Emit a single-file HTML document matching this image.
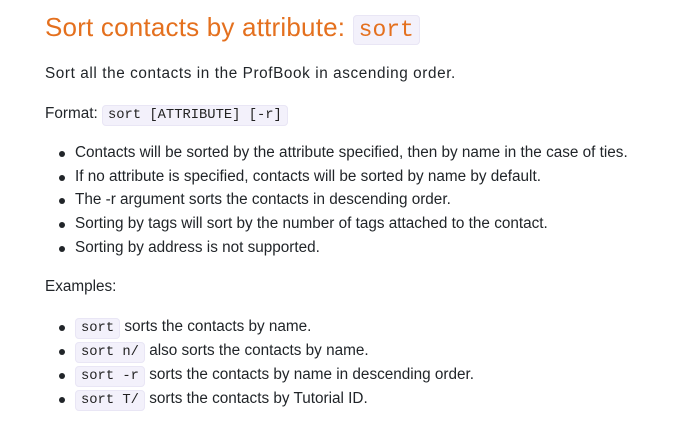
<!DOCTYPE html>
<html><head><meta charset="utf-8"><style>
body{margin:0;background:#fff;font-family:"Liberation Sans",sans-serif;color:#212529;font-size:15.3px;}
.w{position:relative;width:687px;height:434px;overflow:hidden}
.a{position:absolute;left:45px;white-space:nowrap}
code{font-family:"Liberation Mono",monospace;font-size:13.8px;letter-spacing:0;background:#f3f1fb;border:1px solid #e9e6f5;border-radius:4px;padding:2px 5px;color:#222}
h1{margin:0;font-weight:normal;color:#e4701e;font-size:26px;letter-spacing:0.2px}
h1 code{font-size:23px;padding:1px 5px;color:#e4701e}
li{position:absolute;left:75px;white-space:nowrap}
li:before{content:"";position:absolute;left:-16px;top:7px;width:6px;height:6px;border-radius:50%;background:#212529}
ul{margin:0;padding:0;list-style:none}
</style></head><body><div class="w">
<h1 class="a" style="top:12px">Sort contacts by attribute: <code>sort</code></h1>
<div class="a" style="top:65px;letter-spacing:0.6px">Sort all the contacts in the ProfBook in ascending order.</div>
<div class="a" style="top:105px">Format: <code>sort [ATTRIBUTE] [-r]</code></div>
<ul>
<li style="top:144px">Contacts will be sorted by the attribute specified, then by name in the case of ties.</li>
<li style="top:168px">If no attribute is specified, contacts will be sorted by name by default.</li>
<li style="top:191px">The -r argument sorts the contacts in descending order.</li>
<li style="top:215px">Sorting by tags will sort by the number of tags attached to the contact.</li>
<li style="top:239px">Sorting by address is not supported.</li>
</ul>
<div class="a" style="top:278px">Examples:</div>
<ul>
<li style="top:318px"><code>sort</code> sorts the contacts by name.</li>
<li style="top:342px"><code>sort n/</code> also sorts the contacts by name.</li>
<li style="top:366px"><code>sort -r</code> sorts the contacts by name in descending order.</li>
<li style="top:390px"><code>sort T/</code> sorts the contacts by Tutorial ID.</li>
</ul>
</div></body></html>
